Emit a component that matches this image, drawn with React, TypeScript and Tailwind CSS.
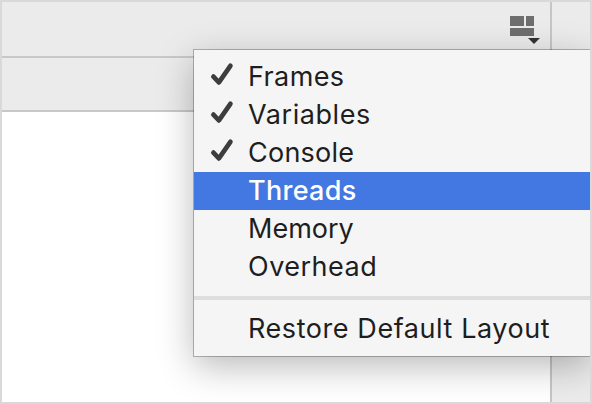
type Item = { label: string; checked?: boolean; active?: boolean; spacing: string };

const items: Item[] = [
  { label: "Frames", checked: true, spacing: "tracking-[0.4px]" },
  { label: "Variables", checked: true, spacing: "tracking-[0.55px]" },
  { label: "Console", checked: true, spacing: "tracking-[0.25px]" },
  { label: "Threads", active: true, spacing: "tracking-[0.3px]" },
  { label: "Memory", spacing: "tracking-[0px]" },
  { label: "Overhead", spacing: "tracking-[0.5px]" },
];

function Check() {
  return (
    <svg className="overflow-visible" width="24" height="24" viewBox="0 0 24 24" fill="none" stroke="#3d3d3d" strokeWidth="4.7" strokeLinecap="round" strokeLinejoin="round">
      <path d="M3.4 13.6 L8.9 19.4 L20.4 2.8" />
    </svg>
  );
}

function LayoutIcon() {
  return (
    <svg width="32" height="32" viewBox="0 0 32 32" shapeRendering="crispEdges">
      <g fill="#6e6e6e">
        <rect x="0" y="2" width="14" height="10" />
        <rect x="16" y="2" width="8" height="10" />
        <rect x="0" y="14" width="24" height="8" />
      </g>
      <path d="M18 24h12l-6 6z" fill="#323232" shapeRendering="geometricPrecision" />
    </svg>
  );
}

function Row({ label, checked, active, spacing }: Item) {
  return (
    <div className={`flex h-[38px] items-center ${active ? "bg-[#4377e1] font-medium text-white" : "text-[#1e1e1e]"}`}>
      <span className="flex w-[54px] shrink-0 pb-1 pl-4">{checked && <Check />}</span>
      <span className={`whitespace-nowrap leading-[38px] ${spacing}`}>{label}</span>
    </div>
  );
}

export default function App() {
  return (
    <div className="relative flex h-[404px] w-[592px] overflow-hidden border-2 border-[#d9d9d9] bg-[#ebebeb] font-['Inter',sans-serif] text-[27px]">
      <div className="flex flex-1 flex-col border-r-2 border-[#c6c6c6]">
        <div className="flex h-14 shrink-0 justify-end border-b-2 border-[#c8c8c8] pr-2 pt-3">
          <LayoutIcon />
        </div>
        <div className="h-[54px] shrink-0 border-b-2 border-[#c8c8c8]" />
        <div className="flex-1 bg-white" />
      </div>
      <div className="w-[38px]" />
      <div className="absolute left-[192px] top-[48px] h-[306px] w-[396px] bg-[#f5f5f5] pt-2 shadow-[0_0_0_1px_rgba(0,0,0,0.25),0_10px_34px_rgba(0,0,0,0.28)]">
        {items.map((item) => (
          <Row key={item.label} {...item} />
        ))}
        <div className="my-2.5 h-1 bg-[#dedede]" />
        <Row label="Restore Default Layout" spacing="tracking-[0.57px]" />
      </div>
    </div>
  );
}
